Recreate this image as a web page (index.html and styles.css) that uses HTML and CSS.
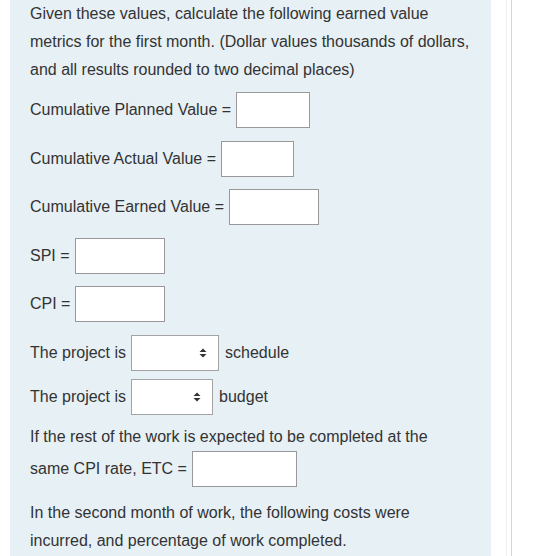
FILE: index.html
```html
<!DOCTYPE html>
<html lang="en">
<head>
  <meta charset="UTF-8" />
  <meta name="viewport" content="width=device-width, initial-scale=1.0"/>
  <title>Earned Value</title>
  <link rel="stylesheet" href="styles.css">
</head>
<body>
  <div class="panel">
    <p class="lead">Given these values, calculate the following earned value metrics for the first month. (Dollar values thousands of dollars, and all results rounded to two decimal places)</p>

    <div class="row">
      <span>Cumulative Planned Value =</span>
      <input type="text" class="field w74"/>
    </div>
    <div class="row">
      <span>Cumulative Actual Value =</span>
      <input type="text" class="field w73"/>
    </div>
    <div class="row">
      <span>Cumulative Earned Value =</span>
      <input type="text" class="field w90"/>
    </div>
    <div class="row">
      <span>SPI =</span>
      <input type="text" class="field w90"/>
    </div>
    <div class="row">
      <span>CPI =</span>
      <input type="text" class="field w90"/>
    </div>

    <div class="row pick">
      <span>The project is</span>
      <span class="select-wrap w88">
        <select class="choice"><option></option><option>ahead of</option><option>behind</option></select>
        <svg class="arrows" width="8" height="10" viewBox="0 0 8 10"><path d="M4 0.5 L7.5 4 L0.5 4 Z M0.5 6 L7.5 6 L4 9.5 Z" fill="#333"/></svg>
      </span>
      <span>schedule</span>
    </div>
    <div class="row pick">
      <span>The project is</span>
      <span class="select-wrap w82">
        <select class="choice"><option></option><option>under</option><option>over</option></select>
        <svg class="arrows" width="8" height="10" viewBox="0 0 8 10"><path d="M4 0.5 L7.5 4 L0.5 4 Z M0.5 6 L7.5 6 L4 9.5 Z" fill="#333"/></svg>
      </span>
      <span>budget</span>
    </div>

    <p class="ask">If the rest of the work is expected to be completed at the</p>
    <div class="row etc">
      <span>same CPI rate, ETC =</span>
      <input type="text" class="field w105"/>
    </div>

    <p class="tail">In the second month of work, the following costs were incurred, and percentage of work completed.</p>
  </div>

  <div class="rail"></div>
</body>
</html>
```

FILE: styles.css
```css
html, body {
  height: 100%;
}

body {
  margin: 0;
  padding: 0;
  display: flex;
  background-color: #fff;
  color: #333;
  font-family: "Liberation Sans", Arial, sans-serif;
  font-size: 16px;
  overflow: hidden;
}

.panel {
  margin-left: 10px;
  width: 481px;
  box-sizing: border-box;
  padding: 0 18px 0 20px;
  background-color: #e6f0f5;
  flex-shrink: 0;
}

p {
  margin: 0;
  line-height: 28px;
}

.lead {
  margin-bottom: 8px;
}

.row {
  display: flex;
  align-items: center;
  gap: 5px;
  height: 36px;
  margin-bottom: 12.5px;
  white-space: nowrap;
}

.row.pick {
  gap: 6px;
  margin-bottom: 8px;
}

.row.pick span:first-child {
  margin-right: -1px;
}

.row.etc {
  margin-bottom: 12px;
}

.field {
  height: 36px;
  box-sizing: border-box;
  border: 1px solid #999;
  border-radius: 0;
  background: #fff;
  padding: 0 6px;
  font: inherit;
  margin: 0;
}

.w73 { width: 73px; }
.w74 { width: 74px; }
.w82 { width: 82px; }
.w88 { width: 88px; }
.w90 { width: 90px; }
.w105 { width: 105px; }

.select-wrap {
  position: relative;
  display: inline-block;
  height: 36px;
}

.choice {
  -webkit-appearance: none;
  appearance: none;
  width: 100%;
  height: 36px;
  box-sizing: border-box;
  border: 1px solid #a3a3a3;
  border-radius: 0;
  background: #fff;
  font: inherit;
  color: #333;
  margin: 0;
  padding: 0 20px 0 6px;
}

.arrows {
  position: absolute;
  right: 12px;
  top: 13px;
  pointer-events: none;
}

.ask {
  margin-bottom: 0;
}

.rail {
  margin-left: 15px;
  width: 4px;
  border-left: 1px solid #efefef;
  border-right: 1px solid #d6d6d6;
  flex-shrink: 0;
}
```
